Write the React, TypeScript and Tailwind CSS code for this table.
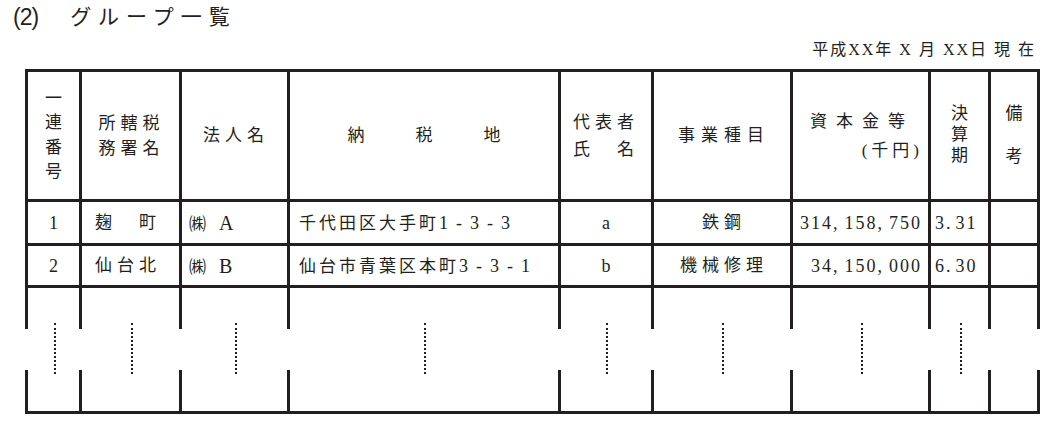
import React from "react"

// dark ink used for both rules and text
const cell = "border-x-[3px] border-[#231f20] p-0"
const boxed = "border-[3px] border-[#231f20] p-0"

function Amount({ value }: { value: string }) {
  const parts = value.split(",")
  return (
    <span className="tracking-[2px] text-[18px]">
      {parts.map((p, i) => (
        <span key={i}>
          {p}
          {i < parts.length - 1 && <span className="mr-[5px]">,</span>}
        </span>
      ))}
    </span>
  )
}

function Address({ name, num }: { name: string; num: string }) {
  return (
    <div className="pl-[9px] text-left whitespace-nowrap">
      <span className="tracking-[3px]">{name}</span>
      <span className="tracking-[8px] text-[18px]">{num}</span>
    </div>
  )
}

function Dots() {
  return <span className="absolute left-1/2 -top-[6px] -bottom-[4px] border-l-2 border-dotted border-[#231f20]" />
}

const rows = [
  { no: "1", office: "麹　町", corp: "A", addr: "千代田区大手町", addrNum: "1-3-3", rep: "a", biz: "鉄鋼", cap: "314,158,750", term: ["3.", "31"] },
  { no: "2", office: "仙台北", corp: "B", addr: "仙台市青葉区本町", addrNum: "3-3-1", rep: "b", biz: "機械修理", cap: "34,150,000", term: ["6.", "30"] },
]

export default function App() {
  return (
    <div className="w-[1057px] h-[423px] bg-white text-[#231f20] font-['Liberation_Serif','Noto_Sans_CJK_JP',serif] overflow-hidden">
      {/* Title */}
      <div className="flex items-center h-[34px] pl-[13px] font-['Liberation_Sans','Noto_Sans_CJK_JP',sans-serif] text-[21px]">
        <span className="text-[23px] leading-[34px] tracking-[-1px]">(2)</span>
        <span className="ml-[32px] tracking-[7px] leading-[34px]">グループ一覧</span>
      </div>

      {/* Date */}
      <div className="flex items-center justify-end h-[32px] pr-[21px] text-[16px] tracking-[2px] leading-none">
        平成XX年 X 月 XX日 現 在
      </div>

      <table className="ml-[25px] mt-[3px] border-collapse table-fixed w-[1012px] text-[17px] leading-none">
        <colgroup>
          <col className="w-[54px]" />
          <col className="w-[100px]" />
          <col className="w-[108px]" />
          <col className="w-[271px]" />
          <col className="w-[93px]" />
          <col className="w-[139px]" />
          <col className="w-[138px]" />
          <col className="w-[60px]" />
          <col className="w-[49px]" />
        </colgroup>
        <tbody>
          {/* Header */}
          <tr className="h-[130px]">
            <td className={boxed}>
              <div className="flex flex-col items-center leading-[24.5px]">
                <span>一</span>
                <span>連</span>
                <span>番</span>
                <span>号</span>
              </div>
            </td>
            <td className={boxed}>
              <div className="text-center pl-[2px] tracking-[5px] leading-[25px]">
                所轄税
                <br />
                務署名
              </div>
            </td>
            <td className={boxed}>
              <div className="text-center pl-[3px] tracking-[5px]">法人名</div>
            </td>
            <td className={boxed}>
              <div className="flex justify-center gap-[51px]">
                <span>納</span>
                <span>税</span>
                <span>地</span>
              </div>
            </td>
            <td className={boxed}>
              <div className="text-center tracking-[5px] leading-[27px]">
                代表者
                <br />
                氏　名
              </div>
            </td>
            <td className={boxed}>
              <div className="text-center pl-[4px] tracking-[6px]">事業種目</div>
            </td>
            <td className={boxed}>
              <div className="flex flex-col">
                <div className="pl-[17px] tracking-[9px]">資本金等</div>
                <div className="mt-[12px] pr-[5px] text-right tracking-[4px]">(千円)</div>
              </div>
            </td>
            <td className={boxed}>
              <div className="flex flex-col items-center leading-[21px] -mt-[2px]">
                <span>決</span>
                <span>算</span>
                <span>期</span>
              </div>
            </td>
            <td className={boxed}>
              <div className="flex flex-col items-center gap-[26px] -mt-[2px]">
                <span>備</span>
                <span>考</span>
              </div>
            </td>
          </tr>

          {/* Data rows */}
          {rows.map((r, i) => (
            <tr key={r.no} className={i === 0 ? "h-[44px]" : "h-[42px]"}>
              <td className={boxed}>
                <div className="text-center text-[18px]">{r.no}</div>
              </td>
              <td className={boxed}>
                <div className="pl-[13px] tracking-[5px] whitespace-nowrap">{r.office}</div>
              </td>
              <td className={boxed}>
                <div className="flex items-center pl-[7px]">
                  <span className="font-['Noto_Sans_CJK_JP',sans-serif] text-[17px]">㈱</span>
                  <span className="ml-[13px] text-[20px]">{r.corp}</span>
                </div>
              </td>
              <td className={boxed}>
                <Address name={r.addr} num={r.addrNum} />
              </td>
              <td className={boxed}>
                <div className="text-center text-[18px]">{r.rep}</div>
              </td>
              <td className={boxed}>
                <div className="text-center pl-[4px] tracking-[5px]">{r.biz}</div>
              </td>
              <td className={boxed}>
                <div className="text-right pr-[6px]">
                  <Amount value={r.cap} />
                </div>
              </td>
              <td className={boxed}>
                <div className="pl-[4px] tracking-[2px] text-[18px] whitespace-nowrap">
                  {r.term[0]}
                  <span className="ml-[3px]">{r.term[1]}</span>
                </div>
              </td>
              <td className={boxed} />
            </tr>
          ))}

          {/* Blank row, upper half */}
          <tr className="h-[42px]">
            {Array.from({ length: 9 }).map((_, i) => (
              <td key={i} className={`${cell} border-t-[3px]`} />
            ))}
          </tr>

          {/* Break with dotted continuation marks */}
          <tr className="h-[41px]">
            {Array.from({ length: 9 }).map((_, i) => (
              <td key={i} className="relative p-0">
                {i < 8 && <Dots />}
              </td>
            ))}
          </tr>

          {/* Blank row, lower half */}
          <tr className="h-[43px]">
            {Array.from({ length: 9 }).map((_, i) => (
              <td key={i} className={`${cell} border-b-[3px]`} />
            ))}
          </tr>
        </tbody>
      </table>
    </div>
  )
}
